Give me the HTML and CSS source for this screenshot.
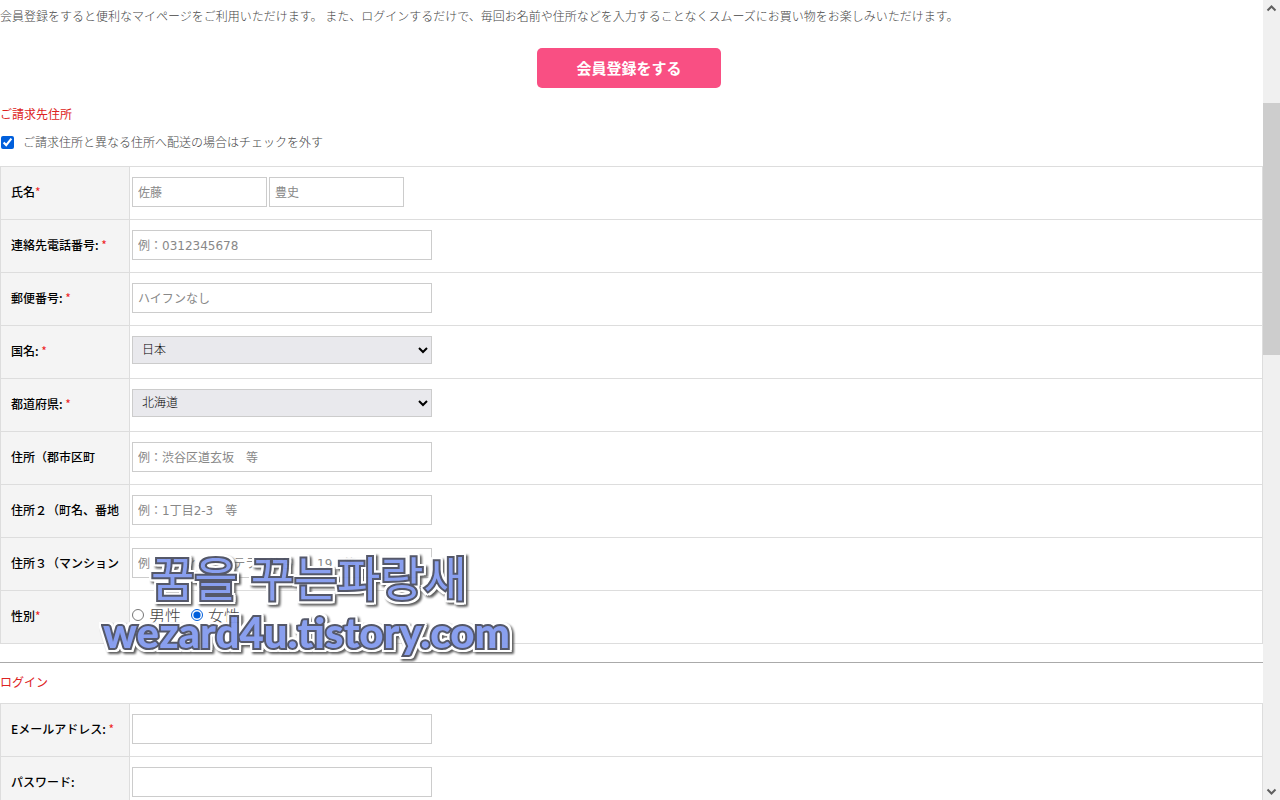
FILE: index.html
```html
<!DOCTYPE html>
<html lang="ja">
<head>
    <meta charset="UTF-8">
    <meta name="viewport" content="width=device-width, initial-scale=1.0">
    <title>会員登録</title>
    <link rel="stylesheet" href="styles.css">
</head>
<body>

    <main class="page">
        <p class="lead">会員登録をすると便利なマイページをご利用いただけます。 また、ログインするだけで、毎回お名前や住所などを入力することなくスムーズにお買い物をお楽しみいただけます。</p>
        <div class="register">
            <button type="button" class="register-button">会員登録をする</button>
        </div>

        <form id="addressForm">
            <h2 class="section-title">ご請求先住所</h2>
            <div class="same-address">
                <input type="checkbox" id="sameAddress" class="check" checked>
                <label for="sameAddress">ご請求住所と異なる住所へ配送の場合はチェックを外す</label>
            </div>

            <table class="form-table">
                <tr>
                    <th><label for="lastName">氏名<span class="required">*</span></label></th>
                    <td>
                        <div class="name-fields">
                            <input type="text" id="lastName" class="field" placeholder="佐藤">
                            <input type="text" id="firstName" class="field" placeholder="豊史" aria-label="名">
                        </div>
                    </td>
                </tr>
                <tr>
                    <th><label for="phone">連絡先電話番号: <span class="required">*</span></label></th>
                    <td><input type="text" id="phone" class="field" placeholder="例：0312345678"></td>
                </tr>
                <tr>
                    <th><label for="zip">郵便番号: <span class="required">*</span></label></th>
                    <td><input type="text" id="zip" class="field" placeholder="ハイフンなし"></td>
                </tr>
                <tr>
                    <th><label for="country">国名: <span class="required">*</span></label></th>
                    <td><select id="country" class="field select"><option>日本</option></select></td>
                </tr>
                <tr>
                    <th><label for="prefecture">都道府県: <span class="required">*</span></label></th>
                    <td><select id="prefecture" class="field select"><option>北海道</option></select></td>
                </tr>
                <tr>
                    <th><label for="address1">住所（郡市区町</label></th>
                    <td><input type="text" id="address1" class="field" placeholder="例：渋谷区道玄坂　等"></td>
                </tr>
                <tr>
                    <th><label for="address2">住所２（町名、番地</label></th>
                    <td><input type="text" id="address2" class="field" placeholder="例：1丁目2-3　等"></td>
                </tr>
                <tr>
                    <th><label for="address3">住所３（マンション</label></th>
                    <td><input type="text" id="address3" class="field" placeholder="例：シティオークテラス渋谷　　19　等"></td>
                </tr>
                <tr>
                    <th>性別<span class="required">*</span></th>
                    <td>
                        <div class="gender">
                            <input type="radio" name="gender" id="male" class="radio">
                            <label for="male">男性</label>
                            <input type="radio" name="gender" id="female" class="radio" checked>
                            <label for="female">女性</label>
                        </div>
                    </td>
                </tr>
            </table>

            <hr class="divider">

            <h2 class="section-title login-title">ログイン</h2>
            <table class="form-table">
                <tr>
                    <th><label for="email">Eメールアドレス: <span class="required">*</span></label></th>
                    <td><input type="email" id="email" class="field"></td>
                </tr>
                <tr>
                    <th><label for="password">パスワード:</label></th>
                    <td><input type="password" id="password" class="field"></td>
                </tr>
            </table>
        </form>

        <div class="watermark" lang="ko">
            <div class="mark mark-name">꿈을 꾸는파랑새</div>
            <div class="mark mark-url">wezard4u.tistory.com</div>
        </div>
    </main>

    <div class="scrollbar">
        <svg class="arrow" viewBox="0 0 17 17"><path d="M4.500 10.500 8.500 6.500l4 4"></path></svg>
        <div class="track"><div class="thumb"></div></div>
        <svg class="arrow" viewBox="0 0 17 17"><path d="M4.500 6.500l4 4 4-4"></path></svg>
    </div>

</body>
</html>
```
FILE: styles.css
```css
* {
    box-sizing: border-box;
}

body {
    margin: 0;
    height: 100vh;
    display: flex;
    overflow: hidden;
    background: #fff;
    color: #444;
    font-family: "Noto Sans CJK JP", sans-serif;
    font-size: 12px;
    font-weight: 300;
    line-height: 16px;
}

.page {
    position: relative;
    flex: 1;
    min-width: 0;
    overflow: hidden;
}

.lead {
    margin: 8px 0 24px;
}

.register {
    display: flex;
    justify-content: center;
    padding-right: 5px;
}

.register-button {
    width: 184px;
    height: 40px;
    padding: 0 0 2px;
    border: none;
    border-radius: 5px;
    background: #f94f83;
    color: #fff;
    font-family: inherit;
    font-size: 15px;
    font-weight: 700;
    cursor: pointer;
}

.section-title {
    margin: 18px 0 12px;
    color: #d22;
    font-size: 12px;
    font-weight: 400;
}

.same-address {
    display: flex;
    align-items: center;
    gap: 9px;
    margin-bottom: 16px;
}

.check {
    width: 13px;
    height: 13px;
    margin: 0 0 0 1px;
    accent-color: #005fdc;
}

.form-table {
    width: 100%;
    border-collapse: collapse;
    table-layout: fixed;
}

.form-table tr {
    height: 53px;
}

.form-table th,
.form-table td {
    border: 1px solid #ddd;
}

.form-table th {
    width: 129px;
    padding: 0 0 2px 10px;
    background: #f4f4f4;
    color: #000;
    font-weight: 500;
    text-align: left;
    white-space: nowrap;
    overflow: hidden;
}

.form-table td {
    padding: 10px 2px 0;
    vertical-align: top;
}

.required {
    color: #e22;
    font-weight: 400;
}

.field {
    display: block;
    width: 300px;
    height: 30px;
    padding: 2px 5px 0;
    border: 1px solid #ccc;
    background: #fff;
    color: #333;
    font-family: "DejaVu Sans", "Noto Sans CJK JP", sans-serif;
    font-size: 12px;
    font-weight: 400;
}

.field::placeholder {
    color: #888;
}

.name-fields {
    display: flex;
    gap: 2px;
}

.name-fields .field {
    width: 135px;
}

.select {
    height: 28px;
    padding: 0 5px;
    background: #e9e9ed;
    color: #000;
    font-weight: 300;
}

.gender {
    display: flex;
    align-items: center;
    padding-top: 6px;
    font-size: 16px;
}

.gender label {
    margin: 0 10px 0 5px;
}

.radio {
    width: 12px;
    height: 12px;
    margin: 0;
    accent-color: #005fdc;
}

.divider {
    margin: 18px 0 0;
    border: 0;
    border-top: 1px solid #aaa;
}

.login-title {
    margin: 11px 0 13px;
}

/* blog name laid over the form */
.watermark {
    position: absolute;
    top: 547px;
    left: 103px;
    pointer-events: none;
    opacity: 0.95;
}

.mark {
    color: #839aef;
    paint-order: stroke fill;
    white-space: nowrap;
    filter: drop-shadow(2px 0 0 #fff) drop-shadow(-2px 0 0 #fff)
        drop-shadow(0 2px 0 #fff) drop-shadow(0 -2px 0 #fff)
        drop-shadow(2px 2px 1px #555);
}

.mark-name {
    padding-left: 48px;
    font-family: "Noto Sans CJK KR", sans-serif;
    font-size: 47px;
    font-weight: 400;
    line-height: 58px;
    -webkit-text-stroke: 4px #4c5061;
}

.mark-url {
    font-family: Lato, sans-serif;
    font-size: 42px;
    font-weight: 900;
    line-height: 54px;
    -webkit-text-stroke: 4px #4c5061;
}

.scrollbar {
    display: flex;
    flex-direction: column;
    width: 17px;
    background: #f0f0f0;
}

.arrow {
    width: 17px;
    height: 17px;
    fill: none;
    stroke: #606060;
    stroke-width: 2;
}

.track {
    flex: 1;
    padding-top: 86px;
}

.thumb {
    height: 252px;
    background: #cdcdcd;
}
```
